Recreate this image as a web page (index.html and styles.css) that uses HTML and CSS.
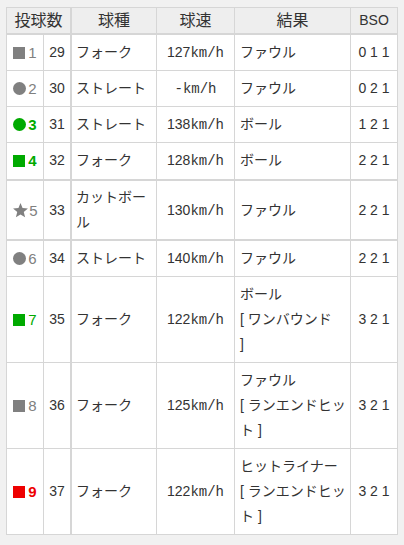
FILE: index.html
```html
<!DOCTYPE html>
<html lang="ja">
<head>
<meta charset="utf-8">
<title>投球</title>
<link rel="stylesheet" href="styles.css">
</head>
<body>
<table class="pitches">
  <colgroup>
    <col class="c-no"><col class="c-cnt"><col class="c-type"><col class="c-speed"><col class="c-res"><col class="c-bso">
  </colgroup>
  <thead>
    <tr>
      <th colspan="2" class="th-pitch">投球数</th>
      <th>球種</th>
      <th>球速</th>
      <th>結果</th>
      <th class="th-bso">BSO</th>
    </tr>
  </thead>
  <tbody>
    <tr>
      <td class="no gray"><span class="sq"></span>1</td>
      <td class="cnt">29</td>
      <td class="type">フォーク</td>
      <td class="speed">127<span class="unit">km/h</span></td>
      <td class="res">ファウル</td>
      <td class="bso">0 1 1</td>
    </tr>
    <tr>
      <td class="no gray"><span class="ci"></span>2</td>
      <td class="cnt">30</td>
      <td class="type">ストレート</td>
      <td class="speed"><span class="unit">-km/h</span></td>
      <td class="res">ファウル</td>
      <td class="bso">0 2 1</td>
    </tr>
    <tr>
      <td class="no green bold"><span class="ci"></span>3</td>
      <td class="cnt">31</td>
      <td class="type">ストレート</td>
      <td class="speed">138<span class="unit">km/h</span></td>
      <td class="res">ボール</td>
      <td class="bso">1 2 1</td>
    </tr>
    <tr class="sep">
      <td class="no green bold"><span class="sq"></span>4</td>
      <td class="cnt">32</td>
      <td class="type">フォーク</td>
      <td class="speed">128<span class="unit">km/h</span></td>
      <td class="res">ボール</td>
      <td class="bso">2 2 1</td>
    </tr>
    <tr class="sep tight">
      <td class="no gray"><svg class="star" viewBox="0 0 24 24"><polygon points="12,1.5 14.9,8.6 22.5,9.1 16.6,14 18.5,21.6 12,17.5 5.5,21.6 7.4,14 1.5,9.1 9.1,8.6" fill="currentColor"/></svg>5</td>
      <td class="cnt">33</td>
      <td class="type">カットボール</td>
      <td class="speed">130<span class="unit">km/h</span></td>
      <td class="res">ファウル</td>
      <td class="bso">2 2 1</td>
    </tr>
    <tr>
      <td class="no gray"><span class="ci"></span>6</td>
      <td class="cnt">34</td>
      <td class="type">ストレート</td>
      <td class="speed">140<span class="unit">km/h</span></td>
      <td class="res">ファウル</td>
      <td class="bso">2 2 1</td>
    </tr>
    <tr>
      <td class="no green"><span class="sq"></span>7</td>
      <td class="cnt">35</td>
      <td class="type">フォーク</td>
      <td class="speed">122<span class="unit">km/h</span></td>
      <td class="res">ボール<br>[ ワンバウンド<br>]</td>
      <td class="bso">3 2 1</td>
    </tr>
    <tr>
      <td class="no gray"><span class="sq"></span>8</td>
      <td class="cnt">36</td>
      <td class="type">フォーク</td>
      <td class="speed">125<span class="unit">km/h</span></td>
      <td class="res">ファウル<br>[ ランエンドヒット ]</td>
      <td class="bso">3 2 1</td>
    </tr>
    <tr>
      <td class="no red bold"><span class="sq"></span>9</td>
      <td class="cnt">37</td>
      <td class="type">フォーク</td>
      <td class="speed">122<span class="unit">km/h</span></td>
      <td class="res">ヒットライナー<br>[ ランエンドヒット ]</td>
      <td class="bso">3 2 1</td>
    </tr>
  </tbody>
</table>
</body>
</html>
```
FILE: styles.css
```css
html, body {
  margin: 0;
  background: #f1f1f1;
}
body {
  padding: 7px 6px;
  font-family: "Liberation Sans", "Noto Sans CJK JP", sans-serif;
  font-size: 14px;
  color: #333;
}
.pitches {
  width: 392px;
  table-layout: fixed;
  border-collapse: separate;
  border-spacing: 0;
  background: #fff;
  border-left: 1px solid #d6d6d6;
  border-top: 1px solid #d6d6d6;
}
.c-no { width: 37px; }
.c-cnt { width: 28px; }
.c-type { width: 85px; }
.c-speed { width: 78px; }
.c-res { width: 116px; }
.c-bso { width: 47px; }

.pitches th,
.pitches td {
  box-sizing: border-box;
  border-right: 1px solid #d6d6d6;
  border-bottom: 1px solid #d6d6d6;
  vertical-align: middle;
}
.pitches th {
  background: #eeeeee;
  font-weight: normal;
  font-size: 16px;
  line-height: 21px;
  height: 27px;
  padding: 2px 0;
  text-align: center;
  border-bottom-width: 2px;
  color: #333;
}
.pitches th.th-pitch { border-right-width: 2px; }
.pitches th.th-bso { font-size: 14px; }

.pitches td {
  padding: 5px 4px;
  line-height: 25px;
}
.pitches tr.sep td { border-bottom-width: 2px; padding-bottom: 6px; }
.pitches tr.tight td { padding-top: 4px; padding-bottom: 4px; }

.pitches td.no {
  padding-left: 0;
  padding-right: 0;
  text-align: center;
  font-size: 15px;
  white-space: nowrap;
}
.pitches td.cnt {
  padding-left: 0;
  padding-right: 0;
  text-align: center;
  border-right-width: 2px;
}
.pitches td.type { padding-left: 4px; padding-right: 5px; }
.pitches td.speed {
  text-align: center;
  padding-left: 0;
  padding-right: 0;
}
.pitches td.res { padding-left: 5px; padding-right: 3px; }
.pitches td.bso {
  text-align: center;
  padding-left: 0;
  padding-right: 0;
}
.unit {
  font-family: "Liberation Mono", monospace;
  line-height: 1;
}

.gray { color: #808080; }
.green { color: #00aa00; }
.red { color: #ee0000; }
.bold { font-weight: bold; }

.sq, .ci {
  display: inline-block;
  width: 12px;
  height: 12px;
  background: currentColor;
  margin-right: 3px;
  vertical-align: -1px;
}
.ci {
  width: 13px;
  height: 13px;
  border-radius: 50%;
  margin-right: 2px;
}
.star {
  display: inline-block;
  width: 17px;
  height: 17px;
  margin-right: 0;
  vertical-align: -3px;
}
```
